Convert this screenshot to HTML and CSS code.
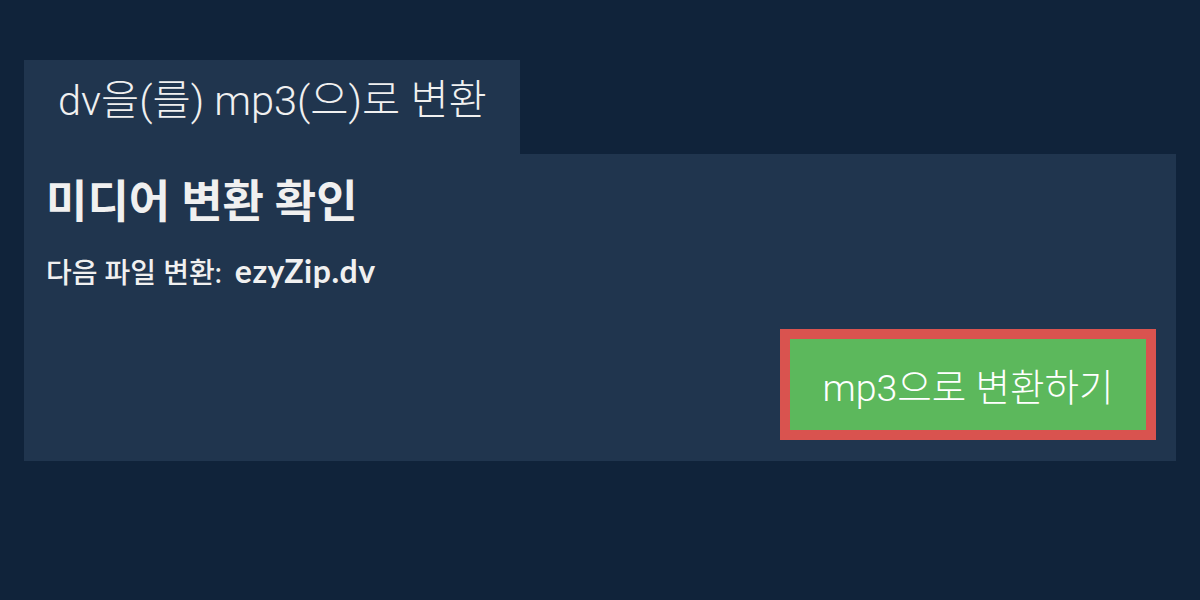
FILE: index.html
```html
<!DOCTYPE html>
<html lang="ko">
<head>
<meta charset="utf-8">
<title>dv을(를) mp3(으)로 변환</title>
<link rel="stylesheet" href="styles.css">
</head>
<body>
<main class="page">
  <div class="tab">dv을(를) mp3(으)로 변환</div>
  <section class="panel">
    <h2 class="panel-title">미디어 변환 확인</h2>
    <p class="panel-text">다음 파일 변환: <strong class="file-name">ezyZip.dv</strong></p>
    <div class="actions">
      <button class="convert-btn" type="button">mp3으로 변환하기</button>
    </div>
  </section>
</main>
</body>
</html>
```
FILE: styles.css
```css
html, body {
  margin: 0;
  padding: 0;
}
body {
  background: #10233a;
  color: #f0f0f0;
  font-family: Lato, "Noto Sans CJK KR", sans-serif;
}
.page {
  padding: 60px 24px 0 24px;
}
.tab {
  width: 496px;
  box-sizing: border-box;
  height: 94px;
  padding: 0 34px;
  background: #20354e;
  font-family: Roboto, "Noto Sans CJK KR", sans-serif;
  font-weight: 300;
  font-size: 41.5px;
  line-height: 81px;
  white-space: nowrap;
}
.panel {
  background: #20354e;
  padding: 20px 20px 21px 22px;
}
.panel-title {
  margin: 0;
  font-size: 45px;
  font-weight: 700;
  line-height: 54px;
}
.panel-text {
  margin: 27px 0 0 0;
  font-size: 28px;
  font-weight: 500;
  line-height: 34px;
}
.file-name {
  font-weight: 700;
  font-size: 32px;
  line-height: 28px;
  letter-spacing: 0.5px;
  margin-left: 6px;
}
.actions {
  display: flex;
  justify-content: flex-end;
  margin-top: 40px;
}
.convert-btn {
  width: 376px;
  height: 111px;
  border: 10px solid #d9534f;
  background: #5cb85c;
  color: #ffffff;
  font-family: Roboto, "Noto Sans CJK KR", sans-serif;
  font-weight: 300;
  font-size: 37.5px;
  padding: 0;
  cursor: pointer;
}
```
